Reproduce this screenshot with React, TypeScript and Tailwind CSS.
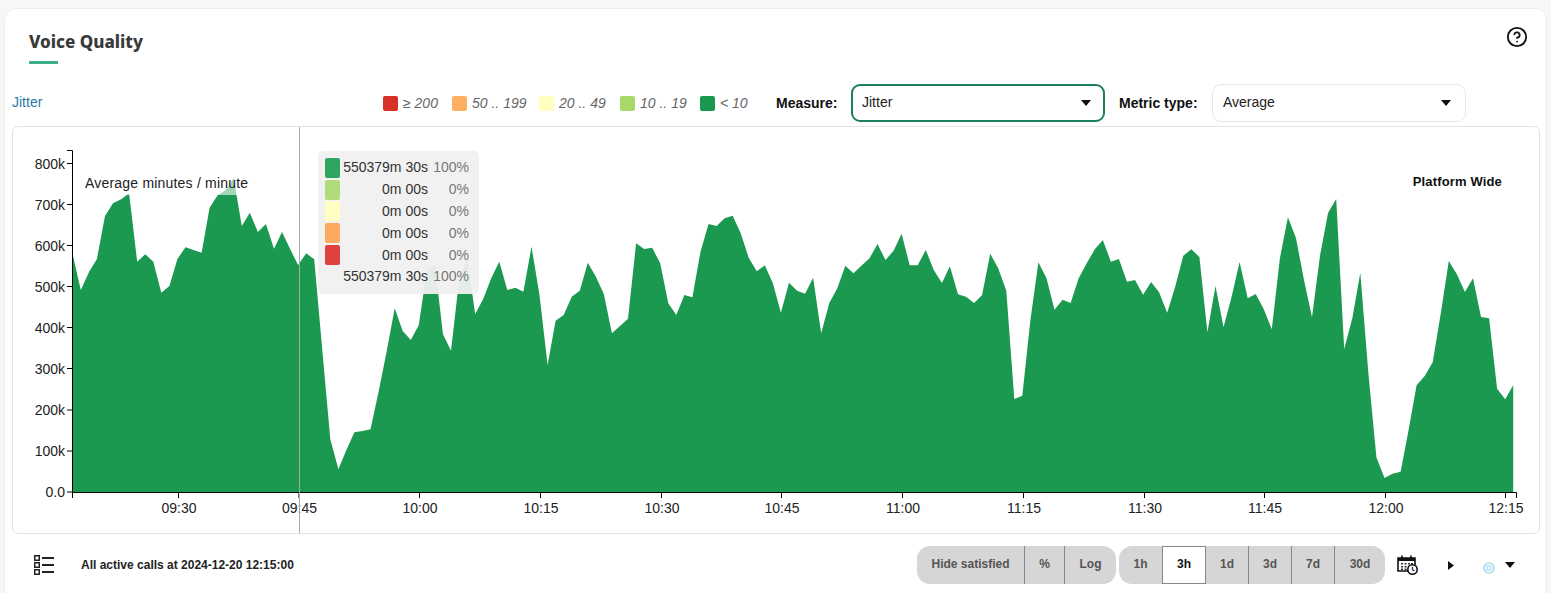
import React from "react";
import { CircleHelp } from "lucide-react";

const ys = [
  255, 290, 272.3, 259, 216, 203.3, 199.3, 193.3, 261.7, 254.3, 261.7, 292.7, 286, 259, 247.3, 250, 252.7, 207.7, 195.3, 190,
  178.3, 226, 212.7, 232, 224, 248.7, 232, 249, 265, 253.3, 259.3, 350, 439.3, 469.3, 450, 432.3, 431, 429.3, 391.7, 351.7,
  308.3, 331, 340, 325, 270, 265, 334.3, 350.7, 280, 258, 314, 299, 278.3, 261.7, 290, 287.7, 291.7, 246.7, 295, 365,
  320.7, 315, 296.7, 290.7, 262.7, 276.7, 294.3, 333.3, 326, 318.7, 243.3, 249, 247.7, 263.3, 303.3, 315, 295, 297.3, 251.7, 224,
  226, 218.3, 215.7, 233.3, 257.7, 271.3, 265.3, 283.3, 312.7, 282.7, 290.7, 293.7, 277.7, 333.3, 303.3, 288.3, 265.7, 273.3, 265.7, 258.3,
  244, 260, 250.7, 233.7, 265.3, 265.3, 250, 270, 283, 266.3, 294.3, 296.7, 303, 295, 253.7, 268.3, 290.7, 399, 395.7, 320,
  262.3, 278.3, 309.7, 299.7, 303, 278.3, 263.3, 249.3, 240, 261.7, 259, 281.7, 280, 294.7, 282, 292.3, 312.7, 286.7, 255.7, 249.3,
  257, 332.3, 286, 327.3, 296.7, 262, 298.3, 294, 309.3, 329.3, 258.3, 217.3, 237.7, 280, 317.3, 255, 212.7, 199, 349, 318.3,
  272.7, 373.3, 457.3, 478, 473.7, 471.7, 430, 385.3, 376, 362.3, 313.3, 261, 274.3, 292, 278.3, 317, 318.3, 388.7, 399.3, 385.3,
];

const START = 72.8;
const STEP = 8.047;
const BASE = 492;
const areaPoints =
  `${START},${BASE} ` +
  ys.map((y, i) => `${(START + i * STEP).toFixed(1)},${y}`).join(" ") +
  ` ${(START + (ys.length - 1) * STEP).toFixed(1)},${BASE}`;

const yTicks = [
  { label: "800k", y: 163.5 },
  { label: "700k", y: 204.5 },
  { label: "600k", y: 245.5 },
  { label: "500k", y: 286.5 },
  { label: "400k", y: 327.5 },
  { label: "300k", y: 368.5 },
  { label: "200k", y: 410 },
  { label: "100k", y: 451 },
  { label: "0.0", y: 492 },
];

const xTicks = [
  { label: "09:30", x: 178.5 },
  { label: "09:45", x: 299 },
  { label: "10:00", x: 419.5 },
  { label: "10:15", x: 540.5 },
  { label: "10:30", x: 661.5 },
  { label: "10:45", x: 781.5 },
  { label: "11:00", x: 902.5 },
  { label: "11:15", x: 1023.5 },
  { label: "11:30", x: 1144.5 },
  { label: "11:45", x: 1264.5 },
  { label: "12:00", x: 1385.5 },
  { label: "12:15", x: 1505.5 },
];

const legend = [
  { cls: "bg-[#d73027]", text: "≥ 200", w: "w-[69px]" },
  { cls: "bg-[#fdae61]", text: "50 .. 199", w: "w-[87px]" },
  { cls: "bg-[#ffffbf]", text: "20 .. 49", w: "w-[81px]" },
  { cls: "bg-[#a6d96a]", text: "10 .. 19", w: "w-[80px]" },
  { cls: "bg-[#1a9850]", text: "< 10", w: "w-[76px]" },
];

const tipRows = [
  { cls: "bg-[#2fa562]", value: "550379m 30s", pct: "100%" },
  { cls: "bg-[#b0dc7c]", value: "0m 00s", pct: "0%" },
  { cls: "bg-[#ffffc3]", value: "0m 00s", pct: "0%" },
  { cls: "bg-[#fbaa60]", value: "0m 00s", pct: "0%" },
  { cls: "bg-[#df423d]", value: "0m 00s", pct: "0%" },
  { cls: "", value: "550379m 30s", pct: "100%" },
];

function Caret() {
  return (
    <svg width="10" height="6" viewBox="0 0 10 6" className="shrink-0">
      <path d="M0 0h10L5 6z" fill="#111" />
    </svg>
  );
}

function Select({ value, focused }: { value: string; focused?: boolean }) {
  return (
    <div
      className={
        focused
          ? "flex h-[38px] w-[254px] items-center justify-between rounded-[9px] border-2 border-[#1d7f5b] bg-white pl-[9px] pr-[12px] text-[14px] text-[#222]"
          : "flex h-[38px] w-[254px] items-center justify-between rounded-[9px] border border-[#e8e8e8] bg-white pl-[10px] pr-[14px] text-[14px] text-[#222]"
      }
    >
      <span className="-mt-[1px]">{value}</span>
      <Caret />
    </div>
  );
}

function Chart() {
  return (
    <svg
      viewBox="13 127 1526 406"
      width="1526"
      height="406"
      className="block"
      style={{ fontFamily: '"Liberation Sans", Arial, sans-serif' }}
    >
      <polygon points={areaPoints} fill="#1c9950" />
      <rect x="85" y="175" width="164" height="20" fill="#ffffff" fillOpacity="0.6" />
      <text x="85" y="188" fontSize="14" fill="#222" letterSpacing="0.2">
        Average minutes / minute
      </text>
      <text x="1502" y="186" fontSize="13" fontWeight="700" fill="#111" textAnchor="end" letterSpacing="0.15">
        Platform Wide
      </text>

      <path d="M67 150.5H72.5V492.5H1516.5V498" fill="none" stroke="#000" strokeWidth="1" />
      <path d="M72.5 492.5V498" fill="none" stroke="#000" strokeWidth="1" />
      {yTicks.map((t) => (
        <g key={t.label}>
          <path d={`M67 ${t.y}H72.5`} stroke="#000" strokeWidth="1" />
          <text x="65" y={t.y + 5} fontSize="14" textAnchor="end" fill="#222">
            {t.label}
          </text>
        </g>
      ))}
      {xTicks.map((t) => (
        <g key={t.label}>
          <path d={`M${t.x} 492.5V498`} stroke="#000" strokeWidth="1" />
          <text x={t.x + 0.5} y="513" fontSize="14" textAnchor="middle" fill="#222">
            {t.label}
          </text>
        </g>
      ))}
      <path d="M299.5 127V533" stroke="#aaaaaa" strokeWidth="1" />
    </svg>
  );
}

function Tooltip() {
  return (
    <div className="absolute left-[305px] top-[24px] h-[143px] w-[161px] rounded-[5px] bg-[#f0f0f0]/95 pl-[7px] pt-[6px]">
      {tipRows.map((r, i) => (
        <div key={i} className="flex h-[21.8px] items-center text-[14px] leading-none text-[#333]">
          <span className={`h-[20px] w-[15px] shrink-0 rounded-[2px] ${r.cls}`} />
          <span className="w-[88px] shrink-0 pb-[1px] text-right">{r.value}</span>
          <span className="w-[41px] shrink-0 pb-[1px] text-right text-[#777]">{r.pct}</span>
        </div>
      ))}
    </div>
  );
}

function Btn({ w, label, active, last }: { w: string; label: string; active?: boolean; last?: boolean }) {
  return (
    <div
      className={`flex h-full items-center justify-center pb-[2px] ${w} ${
        active ? "border border-[#888] bg-white text-[#111]" : "text-[#555]"
      } ${!active && !last ? "border-r border-[#888]" : ""}`}
    >
      {label}
    </div>
  );
}

function ListIcon() {
  return (
    <svg width="20" height="20" viewBox="0 0 20 20" className="shrink-0">
      <g fill="none" stroke="#222" strokeWidth="1.5">
        <rect x="0.75" y="0.75" width="4.5" height="4.5" />
        <rect x="0.75" y="7.75" width="4.5" height="4.5" />
        <rect x="0.75" y="14.75" width="4.5" height="4.5" />
      </g>
      <path d="M8 3h12M8 10h12M8 17h12" stroke="#222" strokeWidth="2" />
    </svg>
  );
}

function CalendarIcon() {
  return (
    <svg width="21" height="20" viewBox="0 0 21 20" className="shrink-0">
      <path d="M1 3h17v13H1z" fill="none" stroke="#111" strokeWidth="1.6" />
      <path d="M1 3h17v3H1z" fill="#111" />
      <path d="M5 0.5v4M14 0.5v4" stroke="#111" strokeWidth="1.6" />
      <path
        d="M4 8h2v1.6H4zM7.5 8h2v1.6h-2zM11 8h2v1.6h-2zM14 8h2v1.6h-2zM4 11h2v1.6H4zM7.5 11h2v1.6h-2zM11 11h2v1.6h-2zM4 13.6h2v1.4H4zM7.5 13.6h2v1.4h-2z"
        fill="#333"
      />
      <circle cx="15.5" cy="14.5" r="4.7" fill="#fff" stroke="#111" strokeWidth="1.6" />
      <path d="M15.5 11.8v3l2 1" fill="none" stroke="#1d3f6e" strokeWidth="1.3" />
    </svg>
  );
}

export default function App() {
  return (
    <div
      className="h-[593px] w-[1551px] overflow-hidden bg-[#f8f7f6] pl-[4px] pt-[8px]"
      style={{ fontFamily: '"Liberation Sans", Arial, sans-serif' }}
    >
      <div className="h-[600px] w-[1543px] rounded-[12px] border border-[#eeeeee] bg-white pl-[7px]">
        <div className="flex h-[75px] items-start justify-between pr-[18px]">
          <div className="ml-[17px] pt-[21px]">
            <h1
              className="text-[17px] font-extrabold leading-[24px] text-[#3a3a3a]"
              style={{ fontFamily: '"Noto Sans", sans-serif' }}
            >
              Voice Quality
            </h1>
            <div className="mt-[7px] h-[3px] w-[29px] bg-[#3db08b]" />
          </div>
          <CircleHelp size={22} strokeWidth={2} color="#111" className="mt-[17px]" />
        </div>

        <div className="flex h-[38px] items-center">
          <div className="w-[371px] -mt-[2px] text-[14px] text-[#2a7aa5]">Jitter</div>
          {legend.map((l) => (
            <div key={l.text} className={`flex items-center gap-[5px] ${l.w}`}>
              <span className={`h-[15px] w-[15px] rounded-[2px] ${l.cls}`} />
              <span className="whitespace-pre text-[14px] italic text-[#666]">{l.text}</span>
            </div>
          ))}
          <div className="w-[75px] text-[14px] font-bold text-[#111]">Measure:</div>
          <Select value="Jitter" focused />
          <div className="ml-[14px] w-[93px] text-[14px] font-bold text-[#111]">Metric type:</div>
          <Select value="Average" />
        </div>

        <div className="relative mt-[4px] h-[408px] w-[1528px] rounded-[6px] border border-[#e4e4e4] bg-white">
          <Chart />
          <Tooltip />
        </div>

        <div className="mt-[12px] flex h-[38px] items-center">
          <div className="ml-[22px]">
            <ListIcon />
          </div>
          <div className="ml-[27px] w-[836px] text-[12px] font-bold text-[#222]">
            All active calls at 2024-12-20 12:15:00
          </div>
          <div className="flex h-[38px] w-[199px] overflow-hidden rounded-[13px] bg-[#d6d6d6] text-[12px] font-bold">
            <Btn w="w-[108px]" label="Hide satisfied" />
            <Btn w="w-[40px]" label="%" />
            <Btn w="w-[51px]" label="Log" last />
          </div>
          <div className="ml-[3px] flex h-[38px] w-[266px] overflow-hidden rounded-[13px] bg-[#d6d6d6] text-[12px] font-bold">
            <Btn w="w-[43px]" label="1h" last />
            <Btn w="w-[44px]" label="3h" active />
            <Btn w="w-[43px]" label="1d" />
            <Btn w="w-[43px]" label="3d" />
            <Btn w="w-[43px]" label="7d" />
            <Btn w="w-[50px]" label="30d" last />
          </div>
          <div className="ml-[12px]">
            <CalendarIcon />
          </div>
          <svg width="6" height="9" viewBox="0 0 6 9" className="ml-[30px] shrink-0">
            <path d="M0 0l6 4.5L0 9z" fill="#111" />
          </svg>
          <svg width="12" height="12" viewBox="0 0 12 12" className="ml-[29px] mt-[5px] shrink-0">
            <circle cx="6" cy="6" r="5" fill="none" stroke="#a8daf0" strokeWidth="1.6" />
            <circle cx="6" cy="6" r="2.4" fill="none" stroke="#a8daf0" strokeWidth="1.2" />
          </svg>
          <div className="ml-[10px] -mt-[1px]">
            <Caret />
          </div>
        </div>
      </div>
    </div>
  );
}
